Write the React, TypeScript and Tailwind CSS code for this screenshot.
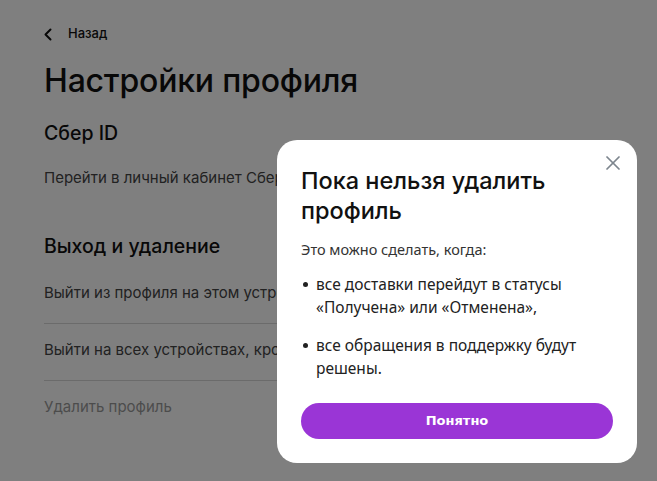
import { X } from 'lucide-react';

const head = { fontFamily: 'Inter, "Noto Sans", sans-serif' };
const body = { fontFamily: '"Noto Sans", "Open Sans", sans-serif' };

export default function App() {
    return (
        <div className="relative h-[481px] w-[657px] overflow-hidden bg-white text-[#111]" style={head}>
            {/* Page */}
            <div className="pl-[44px] pt-[24px] pr-6">
                <div className="flex items-center gap-[16px] h-[20px]">
                    <svg className="w-[8px] h-[13px]" viewBox="0 0 8 13" fill="none" stroke="#111" strokeWidth={2} strokeLinecap="round" strokeLinejoin="round">
                        <path d="M6.5 1.5L1.5 6.5l5 5" />
                    </svg>
                    <span className="text-[13px] font-medium">Назад</span>
                </div>
                <h1 className="mt-[17px] text-[32px] font-medium leading-[40px] tracking-[-0.2px]">Настройки профиля</h1>
                <h2 className="mt-[19px] text-[19.5px] font-medium leading-[26px]">Сбер ID</h2>
                <p className="mt-[22px] text-[15px] leading-[20px] text-[#444]">Перейти в личный кабинет Сбер ID</p>

                <h2 className="mt-[45px] text-[19.5px] font-medium leading-[26px]">Выход и удаление</h2>
                <div className="mt-[7px] border-b border-[#d6d6d6] pt-[17px] pb-[20px] text-[15px] leading-[20px] text-[#444]">
                    Выйти из профиля на этом устройстве
                </div>
                <div className="border-b border-[#d6d6d6] pt-[16px] pb-[20px] text-[15px] leading-[20px] text-[#444]">
                    Выйти на всех устройствах, кроме этого
                </div>
                <div className="pt-[16px] text-[15px] leading-[20px] text-[#999]">Удалить профиль</div>
            </div>

            {/* Overlay */}
            <div className="absolute inset-0 bg-black/50" />

            {/* Dialog */}
            <div className="absolute left-[277px] top-[140px] w-[360px] h-[323px] rounded-[20px] bg-white px-[24px] pt-[26px]">
                <button className="absolute right-[12px] top-[11px] text-[#7d858e]">
                    <X className="w-[24px] h-[24px]" strokeWidth={1.7} />
                </button>
                <h3 className="text-[23.5px] font-medium leading-[30px] text-[#111]">
                    Пока нельзя удалить
                    <br />
                    профиль
                </h3>
                <div style={body} className="text-[#222]">
                    <p className="mt-[12px] text-[14.5px] leading-[22px] text-[#333]">Это можно сделать, когда:</p>
                    <ul className="mt-[13px] flex flex-col gap-[15px] text-[15.5px] leading-[23px]">
                        <li className="flex gap-[8px]">
                            <span className="mt-[9px] w-[5px] h-[5px] rounded-full bg-[#222] shrink-0 ml-[2px]" />
                            <span>
                                все доставки перейдут в статусы
                                <br />
                                «Получена» или «Отменена»,
                            </span>
                        </li>
                        <li className="flex gap-[8px]">
                            <span className="mt-[9px] w-[5px] h-[5px] rounded-full bg-[#222] shrink-0 ml-[2px]" />
                            <span>
                                все обращения в поддержку будут
                                <br />
                                решены.
                            </span>
                        </li>
                    </ul>
                </div>
                <button
                    className="mt-[23px] w-full h-[36px] rounded-full bg-[#9a35d6] text-white text-[13px] font-bold"
                    style={{ fontFamily: '"DejaVu Sans", Verdana, sans-serif' }}
                >
                    Понятно
                </button>
            </div>
        </div>
    );
}
